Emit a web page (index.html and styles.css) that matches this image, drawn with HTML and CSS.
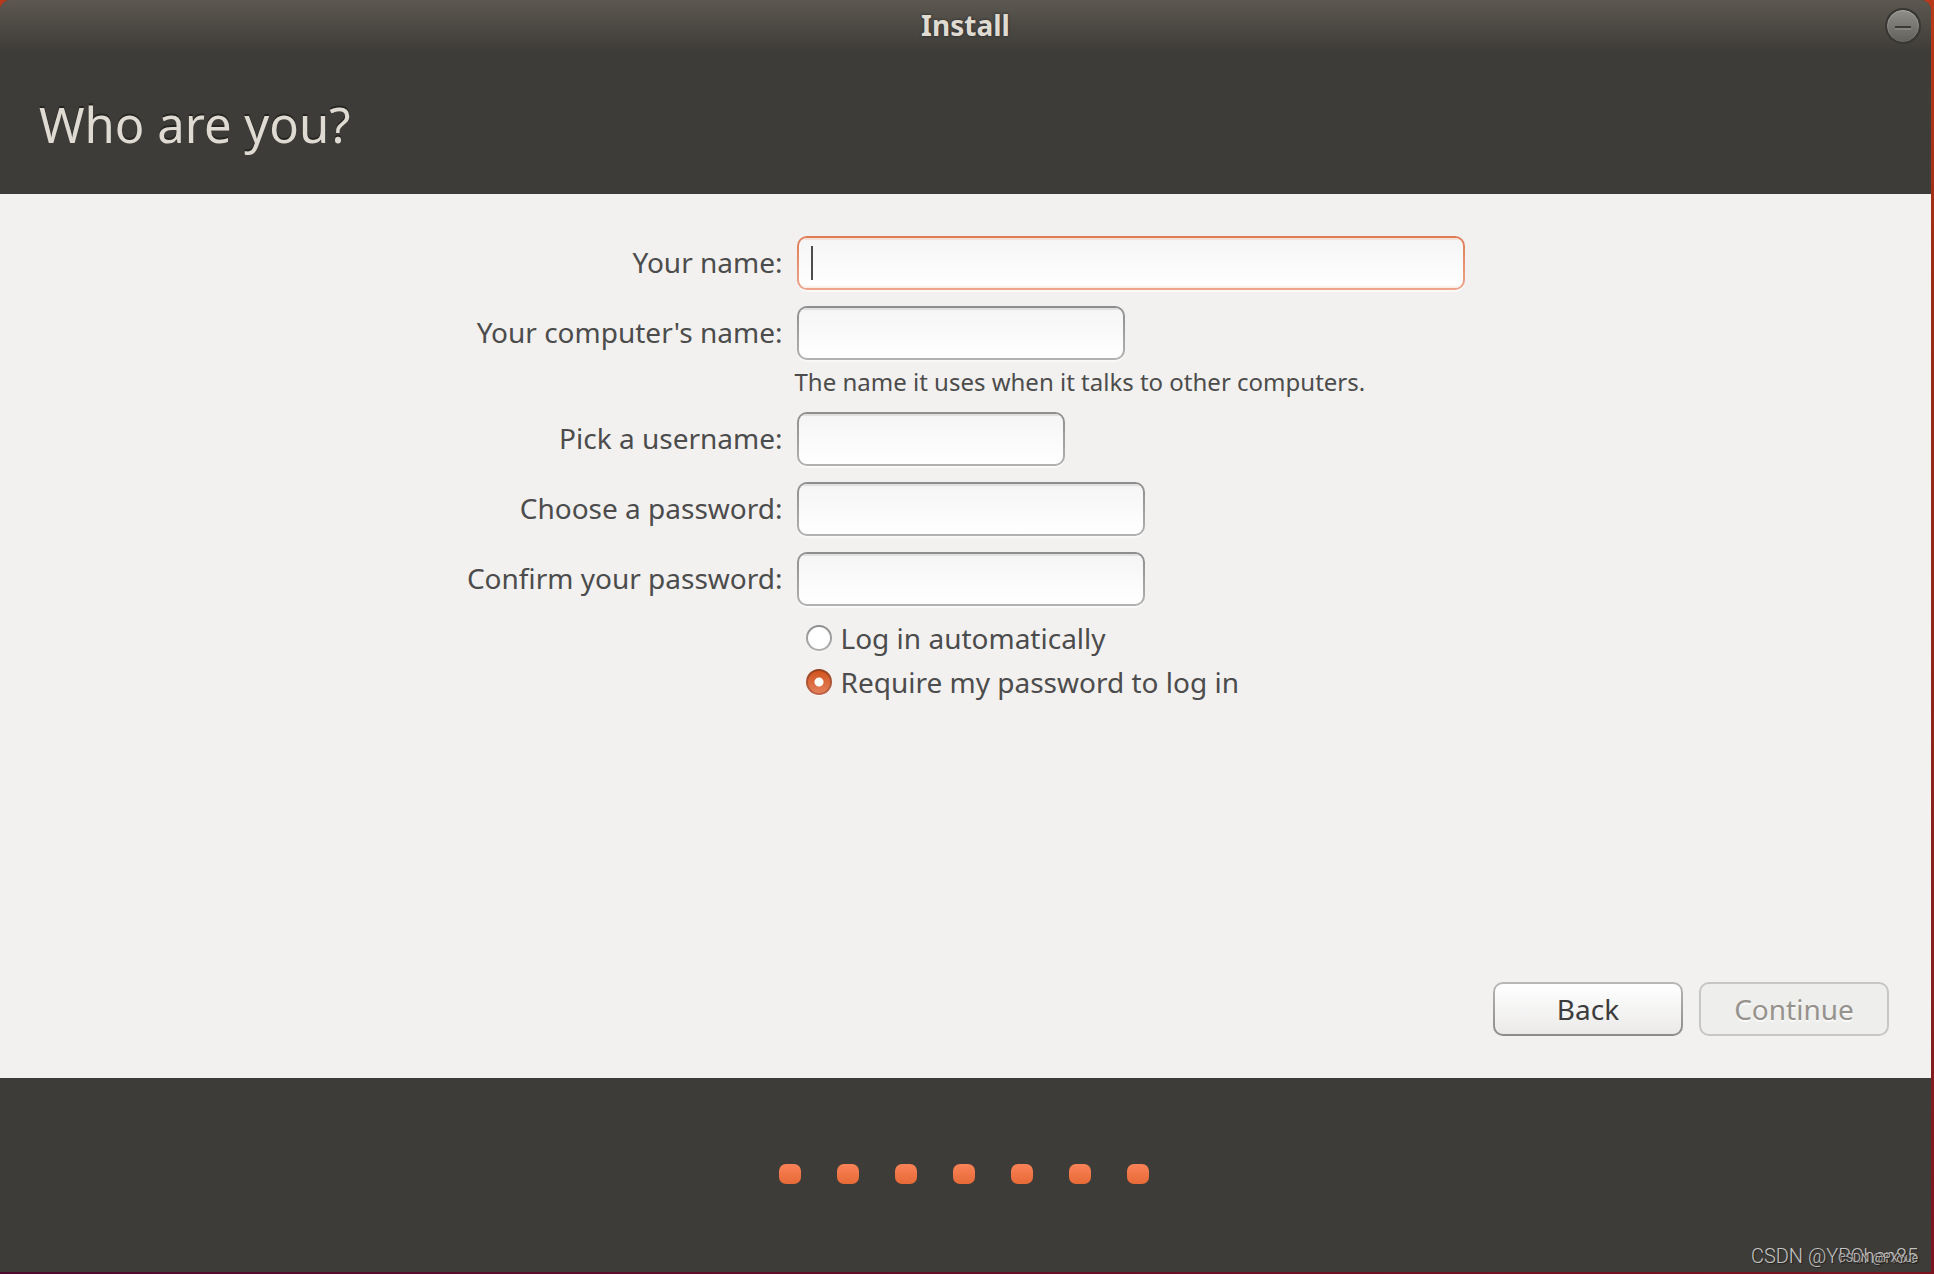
FILE: index.html
```html
<!DOCTYPE html>
<html lang="en">
<head>
<meta charset="utf-8">
<meta name="viewport" content="width=device-width, initial-scale=1">
<title>Install</title>
<link rel="stylesheet" href="styles.css">
</head>
<body>
<div class="window">
  <header class="titlebar">
    <span class="title">Install</span>
    <button class="minimize" type="button" aria-label="Minimize">
      <svg viewBox="0 0 36 36" width="36" height="36" aria-hidden="true">
        <defs>
          <linearGradient id="disc" x1="0" y1="0" x2="0" y2="1">
            <stop offset="0" stop-color="#8e8d87"/>
            <stop offset="1" stop-color="#62615b"/>
          </linearGradient>
          <linearGradient id="rim" x1="0" y1="0" x2="0" y2="1">
            <stop offset="0" stop-color="#aaa9a3"/>
            <stop offset="1" stop-color="#6b6a65"/>
          </linearGradient>
        </defs>
        <circle cx="18" cy="18" r="18" fill="#383733"/>
        <circle cx="18" cy="18" r="15.5" fill="url(#disc)" stroke="url(#rim)"/>
        <rect x="10" y="18" width="16" height="2" fill="#3b3a36"/>
        <rect x="10" y="20" width="16" height="2" fill="#85847e"/>
      </svg>
    </button>
  </header>
  <div class="banner"><h1 class="heading">Who are you?</h1></div>
  <main class="content">
    <form class="form">
      <div class="fields">
        <label class="label" for="name">Your name:</label>
        <div class="cell focused"><input class="entry entry-name" id="name" type="text"><span class="caret"></span></div>

        <label class="label" for="host">Your computer's name:</label>
        <div class="cell"><input class="entry entry-host" id="host" type="text" aria-describedby="host-hint"></div>
        <p class="hint" id="host-hint">The name it uses when it talks to other computers.</p>

        <label class="label" for="user">Pick a username:</label>
        <div class="cell"><input class="entry entry-user" id="user" type="text"></div>

        <label class="label" for="pass">Choose a password:</label>
        <div class="cell"><input class="entry entry-pass" id="pass" type="password"></div>

        <label class="label" for="confirm">Confirm your password:</label>
        <div class="cell"><input class="entry entry-pass" id="confirm" type="password"></div>

        <div class="options">
          <label class="option"><input class="radio" type="radio" name="login"><span>Log in automatically</span></label>
          <label class="option"><input class="radio" type="radio" name="login" checked><span>Require my password to log in</span></label>
        </div>
      </div>
      <div class="actions">
        <button class="button" type="button">Back</button>
        <button class="button" type="submit" disabled>Continue</button>
      </div>
    </form>
  </main>
  <footer class="footer">
    <span class="dot"></span><span class="dot"></span><span class="dot"></span><span class="dot"></span><span class="dot"></span><span class="dot"></span><span class="dot"></span>
  </footer>
</div>
<div class="mark mark-large">CSDN @YPChen85</div>
<div class="mark mark-small">CSDN @PXYue</div>
</body>
</html>
```
FILE: styles.css
```css
* { box-sizing: border-box; }

body {
  margin: 0;
  min-height: 100vh;
  padding: 0 3px 2px 0;
  display: flex;
  position: relative;
  background:
    linear-gradient(90deg, #4f0a30, #7c1420) bottom / 100% 2px no-repeat,
    linear-gradient(#b93a1a, #9c2c18 20%, #84201f 80%, #7c1420);
  color: #4c4c4c;
  font-family: "Noto Sans", sans-serif;
  font-size: 28px;
  line-height: 44px;
}

.window {
  flex: 1;
  display: flex;
  flex-direction: column;
  background: #3e3c38;
  border-radius: 10px 10px 0 0;
  overflow: hidden;
}

.titlebar {
  display: grid;
  grid-template-columns: 1fr auto 1fr;
  align-items: center;
  height: 52px;
  padding: 0 10px;
  background: linear-gradient(#5c5850, #3e3c38);
}

.title {
  grid-column: 2;
  padding-bottom: 2px;
  color: #dfdbd2;
  font-size: 28px;
  font-weight: 700;
  text-shadow: 0 0 3px #222;
}

.minimize {
  justify-self: end;
  display: block;
  width: 36px;
  height: 36px;
  padding: 0;
  border: 0;
  background: none;
}
.minimize svg { display: block; }

.banner {
  height: 142px;
  padding: 36px 39px;
}

.heading {
  margin: 0;
  color: #dfdbd2;
  font-size: 49px;
  font-weight: 400;
  line-height: 72px;
  text-shadow: 0 -2px #262521;
}

.content {
  flex: 1;
  display: flex;
  background: #f2f1f0;
}

.form {
  flex: 1;
  display: flex;
  flex-direction: column;
  justify-content: space-between;
  padding: 42px;
}

.fields {
  display: grid;
  grid-template-columns: 320px minmax(0, 668px);
  column-gap: 14px;
  justify-content: center;
  padding-right: 4px;
}

.label {
  height: 54px;
  line-height: 52px;
  text-align: right;
  white-space: nowrap;
  justify-self: end;
}

.cell {
  position: relative;
  margin-bottom: 16px;
}

.entry {
  display: block;
  max-width: 100%;
  height: 54px;
  padding: 0 14px;
  border: 2px solid transparent;
  border-radius: 10px;
  background:
    linear-gradient(#e0e0e0, #e0e0e0) 0 0 / 100% 2px no-repeat padding-box,
    linear-gradient(#f5f5f5, #fff) padding-box,
    linear-gradient(#8d8d8d, #b2b2b2) border-box;
  box-shadow: 0 2px #f9f9f8;
  color: inherit;
  font: inherit;
  outline: 0;
}
.focused .entry {
  background:
    linear-gradient(#f4e1d9, #f4e1d9) 0 0 / 100% 2px no-repeat padding-box,
    linear-gradient(#fcefe9, #fcefe9) 0 100% / 100% 2px no-repeat padding-box,
    linear-gradient(#f5f5f5, #fff) padding-box,
    linear-gradient(#df7c55, #eea58c) border-box;
}
.entry-name { width: 100%; }
.entry-host { width: 328px; }
.entry-user { width: 268px; }
.entry-pass { width: 348px; }

.caret {
  position: absolute;
  left: 14px;
  top: 10px;
  width: 2px;
  height: 34px;
  background: #4c4c4c;
}

.hint {
  grid-column: 2;
  margin: -8px 0 16px -2px;
  font-size: 24px;
  line-height: 28px;
}

.options {
  grid-column: 2;
  margin-top: -6px;
  padding-left: 9px;
}

.option {
  display: flex;
  align-items: center;
  gap: 9px;
}

.radio {
  appearance: none;
  flex: none;
  width: 26px;
  height: 26px;
  margin: 0;
  border: 2px solid transparent;
  border-radius: 50%;
  background:
    linear-gradient(#fff, #fff) padding-box,
    linear-gradient(#8d8d8d, #b2b2b2) border-box;
  box-shadow: 0 1px #fafafa;
}
.radio:checked {
  background:
    radial-gradient(circle, #fff 4px, transparent 5px) padding-box,
    linear-gradient(#d2541f, #e3805b) padding-box,
    linear-gradient(#94401f, #c4664a) border-box;
}

.actions {
  display: flex;
  justify-content: flex-end;
  gap: 16px;
}

.button {
  width: 190px;
  height: 54px;
  padding: 0;
  border: 2px solid transparent;
  border-radius: 10px;
  background:
    linear-gradient(#fff, #ebeae9) padding-box,
    linear-gradient(#b8b8b7, #8c8b89) border-box;
  color: #3c3c3c;
  font: inherit;
}
.button:disabled {
  border-color: #c6c6c4;
  background: #eeeeec;
  color: #96938e;
  text-shadow: 0 2px #fafafa;
}

.footer {
  display: flex;
  justify-content: center;
  gap: 36px;
  height: 194px;
  padding: 86px 4px 88px 0;
}

.dot {
  width: 22px;
  height: 20px;
  border-radius: 7px;
  background: linear-gradient(#fa8358, #e76a36);
}

.mark {
  position: absolute;
  right: 16px;
  bottom: 6px;
  font-family: Roboto, sans-serif;
  text-shadow: 1px 1px 1px #222;
  white-space: nowrap;
}
.mark-large {
  color: #c4c3c1;
  font-size: 20px;
  font-weight: 300;
  line-height: 24px;
}
.mark-small {
  color: #b0afad;
  font-size: 12px;
  line-height: 20px;
}
```
